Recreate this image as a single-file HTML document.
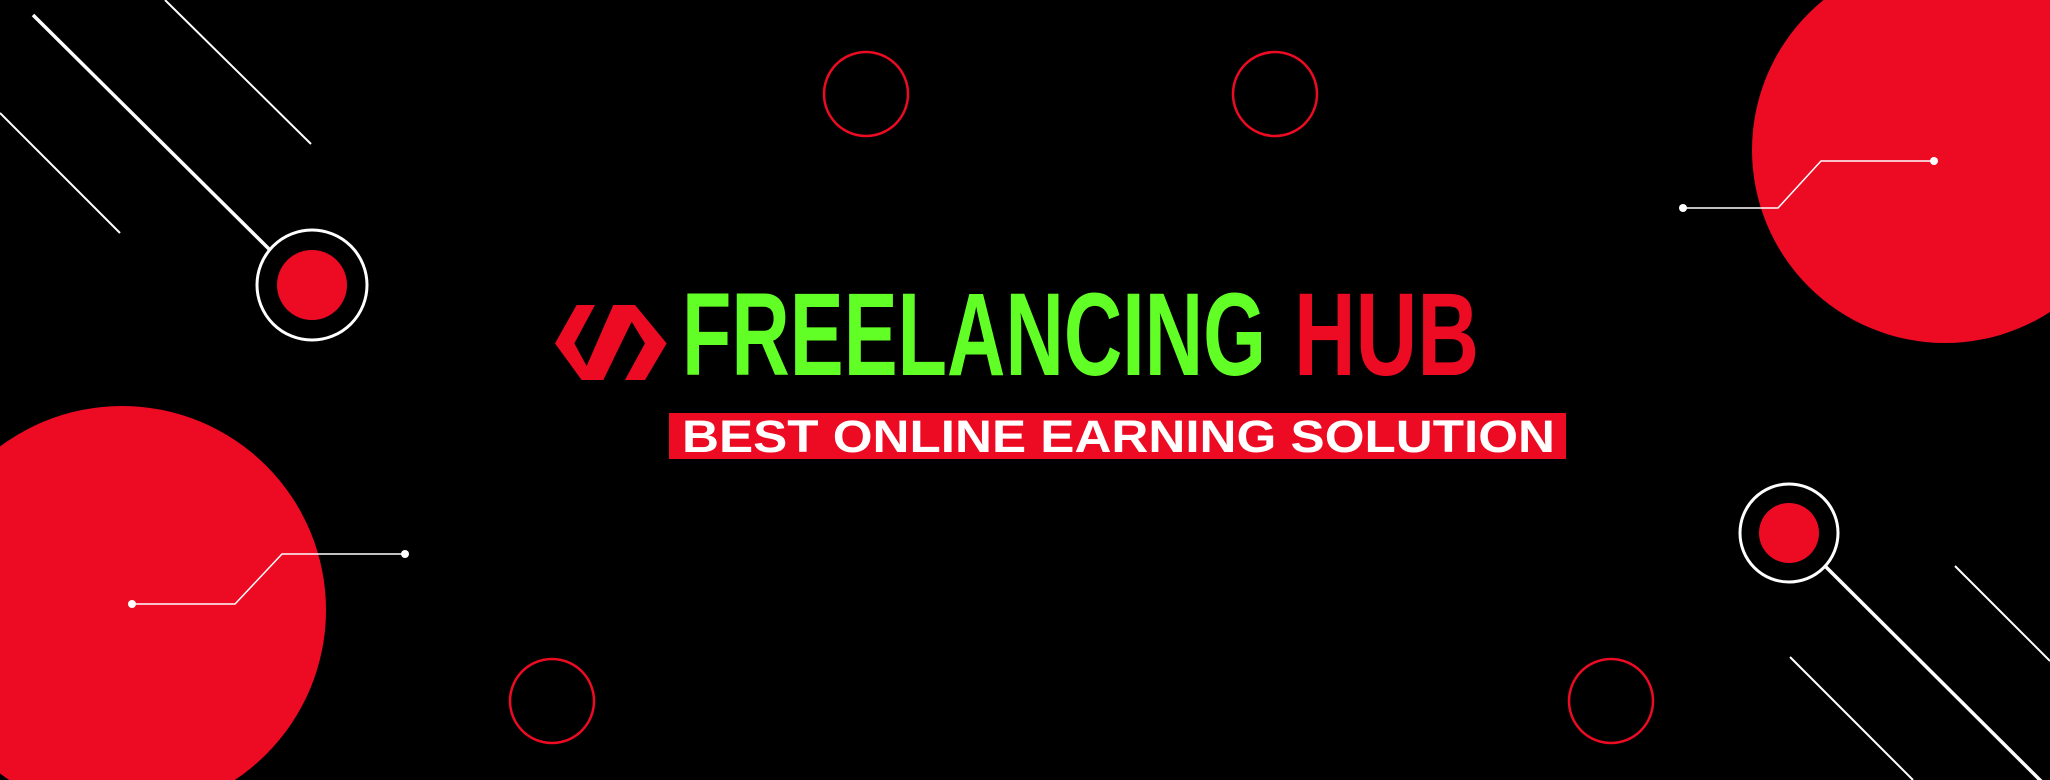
<!DOCTYPE html>
<html><head><meta charset="utf-8"><style>
html,body{margin:0;padding:0;background:#000;width:2050px;height:780px;overflow:hidden}
</style></head><body>
<svg width="2050" height="780" viewBox="0 0 2050 780" xmlns="http://www.w3.org/2000/svg">
<rect width="2050" height="780" fill="#000"/>
<circle cx="122" cy="610" r="204" fill="#ec0b23"/>
<circle cx="1945" cy="150" r="193" fill="#ec0b23"/>
<line x1="33" y1="15" x2="270" y2="250" stroke="#fff" stroke-width="3.5"/>
<line x1="165" y1="0" x2="311" y2="144" stroke="#fff" stroke-width="2"/>
<line x1="0" y1="113" x2="120" y2="233" stroke="#fff" stroke-width="2"/>
<circle cx="312" cy="285" r="55" fill="none" stroke="#fff" stroke-width="3"/>
<circle cx="312" cy="285" r="35" fill="#ec0b23"/>
<line x1="1822" y1="563" x2="2050" y2="790" stroke="#fff" stroke-width="3.5"/>
<line x1="1955" y1="566" x2="2050" y2="661" stroke="#fff" stroke-width="2"/>
<line x1="1790" y1="657" x2="1913" y2="780" stroke="#fff" stroke-width="2"/>
<circle cx="1789" cy="533" r="49" fill="#000" stroke="#fff" stroke-width="3"/>
<circle cx="1789" cy="533" r="30" fill="#ec0b23"/>
<polyline points="132,604 235,604 282,554 405,554" fill="none" stroke="#fff" stroke-width="1.5"/>
<circle cx="132" cy="604" r="4" fill="#fff"/><circle cx="405" cy="554" r="4" fill="#fff"/>
<polyline points="1683,208 1778,208 1821,161 1934,161" fill="none" stroke="#fff" stroke-width="1.5"/>
<circle cx="1683" cy="208" r="4" fill="#fff"/><circle cx="1934" cy="161" r="4" fill="#fff"/>
<g fill="none" stroke="#ec0b23" stroke-width="2.5">
<circle cx="866" cy="94" r="42"/><circle cx="1275" cy="94" r="42"/>
<circle cx="552" cy="701" r="42"/><circle cx="1611" cy="701" r="42"/>
</g>
<g transform="translate(545,290) scale(0.3333)">
<polygon fill="#ec0b23" points="95,45 150,45 88,160 125,228 205,45 270,45 365,160 300,270 240,270 300,160 260,95 175,270 110,270 30,160"/>
</g>
<text x="682" y="375" font-family="Liberation Sans Narrow, Liberation Sans, sans-serif" font-weight="bold" font-size="118" fill="#62ff26" textLength="584" lengthAdjust="spacingAndGlyphs">FREELANCING</text>
<text x="1294" y="375" font-family="Liberation Sans Narrow, Liberation Sans, sans-serif" font-weight="bold" font-size="118" fill="#ec0b23" textLength="185" lengthAdjust="spacingAndGlyphs">HUB</text>
<rect x="669" y="413" width="897" height="46" fill="#ec0b23"/>
<text x="682" y="452" font-family="Liberation Sans, sans-serif" font-weight="bold" font-size="45" fill="#fff" textLength="873" lengthAdjust="spacingAndGlyphs">BEST ONLINE EARNING SOLUTION</text>
</svg>
</body></html>
